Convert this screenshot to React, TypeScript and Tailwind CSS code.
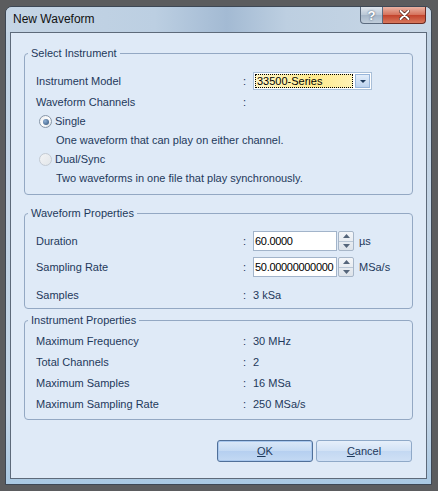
import type { ReactNode } from 'react';
import { clsx } from 'clsx';

function Group({ title, className, children }: { title: string; className?: string; children: ReactNode }) {
  return (
    <fieldset className={clsx('min-w-0 rounded-[4px] border border-[#93a8c3]', className)}>
      <legend className="ml-[3px] px-[3px] h-[14px] leading-[14px] text-[11px] text-[#1e395b]">{title}</legend>
      {children}
    </fieldset>
  );
}

function Row({ label, h, children }: { label: string; h: string; children?: ReactNode }) {
  return (
    <div className={clsx('flex items-center', h)}>
      <span className="w-[207px] shrink-0">{label}</span>
      <span className="w-[10px] shrink-0">:</span>
      <div className="flex items-center">{children}</div>
    </div>
  );
}

function Radio({ checked, disabled }: { checked?: boolean; disabled?: boolean }) {
  return (
    <span
      className={clsx(
        'flex h-[13px] w-[13px] items-center justify-center rounded-full border',
        disabled
          ? 'border-[#c3cad3] bg-[linear-gradient(135deg,#f2f3f5,#e2e6ea)]'
          : 'border-[#8796a8] bg-[linear-gradient(135deg,#e9ebee,#ffffff_55%,#d6dbe1)]'
      )}
    >
      {checked && <span className="h-[6px] w-[6px] rounded-full bg-[radial-gradient(circle_at_35%_35%,#8eb0d6,#2f5076)]" />}
    </span>
  );
}

function Spin() {
  return (
    <div className="ml-[1px] flex h-[20px] w-[16px] flex-col rounded-[2px] border border-[#a7b6c8] bg-[linear-gradient(#f4f6f9,#dde3ea)]">
      <div className="flex flex-1 items-center justify-center border-b border-[#b9c6d5]">
        <svg width="7" height="4" viewBox="0 0 7 4"><path d="M0 4 L3.5 0 L7 4 Z" fill="#55657a" /></svg>
      </div>
      <div className="flex flex-1 items-center justify-center">
        <svg width="7" height="4" viewBox="0 0 7 4"><path d="M0 0 L3.5 4 L7 0 Z" fill="#55657a" /></svg>
      </div>
    </div>
  );
}

function NumberBox({ value, unit }: { value: string; unit: string }) {
  return (
    <>
      <div className="h-[20px] w-[84px] overflow-hidden whitespace-nowrap border border-[#a2b4ca] bg-white pl-[1px] leading-[18px] tracking-[-0.3px] text-black">
        {value}
      </div>
      <Spin />
      <span className="ml-[5px]">{unit}</span>
    </>
  );
}

export default function App() {
  return (
    <div className="h-[491px] w-[438px] bg-[#5b5c5e] pb-[6px] pl-[5px] pr-[6px] pt-[6px] font-['Liberation_Sans',Arial,sans-serif]">
      <div className="flex h-full flex-col rounded-t-[7px] border border-[#3d4754] bg-[linear-gradient(180deg,#c2d3e4_0%,#c4d5e6_85%,#a9c8e2_100%)]">
        <div className="flex h-[25px] shrink-0 items-start rounded-t-[6px] bg-[linear-gradient(90deg,#c5d5e5_0%,#bccfe2_35%,#a3bad3_52%,#bdcfe1_66%,#c8d7e6_100%)]">
          <span className="pl-[7px] pt-[5px] text-[12px] leading-[15px] text-[#111]">New Waveform</span>
          <div className="ml-auto mr-[5px] flex">
            <div className="flex h-[17px] w-[23px] items-center justify-center rounded-bl-[4px] border border-t-0 border-[#5c6c80] bg-[linear-gradient(#dfe6ee,#b9c7d6_50%,#a4b5c8_50%,#c1cedb)] text-[13px] font-bold leading-none text-white [text-shadow:0_0_2px_#33455c]">
              ?
            </div>
            <div className="flex h-[17px] w-[43px] items-center justify-center rounded-br-[4px] border border-l-0 border-t-0 border-[#6a2a22] bg-[linear-gradient(#eab3a4,#d5715a_50%,#c2412a_50%,#d8785c)]">
              <svg width="11" height="10" viewBox="0 0 11 10">
                <path d="M1.5 1 L9.5 9 M9.5 1 L1.5 9" stroke="#4a1a14" strokeWidth="3.4" strokeLinecap="round" />
                <path d="M1.5 1 L9.5 9 M9.5 1 L1.5 9" stroke="#ffffff" strokeWidth="2" strokeLinecap="round" />
              </svg>
            </div>
          </div>
        </div>

        <div className="mb-[5px] ml-[4px] mr-[4px] flex flex-1 flex-col border border-[#5d6a7a] bg-[#dfeaf7] px-[13px] pt-[13px] text-[11px] text-[#1e395b]">
          <Group title="Select Instrument">
            <div className="pb-[6px] pl-[11px] pt-[11px]">
              <Row label="Instrument Model" h="h-[20px]">
                <div className="flex h-[18px] w-[119px] items-center border border-[#a9bfd8] bg-white">
                  <div className="ml-[1px] flex h-[14px] w-[98px] items-center border border-dotted border-black bg-[linear-gradient(90deg,#fff6c6_0%,#ffea8c_60%,#fff2b5_100%)] pl-[1px] leading-none text-black">
                    33500-Series
                  </div>
                  <div className="ml-auto mr-[1px] flex h-[14px] w-[15px] items-center justify-center border border-[#97b5da] bg-[linear-gradient(#e2edfa,#bcd3ef)]">
                    <svg width="6" height="3" viewBox="0 0 6 3"><path d="M0 0 L3 3 L6 0 Z" fill="#1e395b" /></svg>
                  </div>
                </div>
              </Row>
              <div className="mt-[2px]">
                <Row label="Waveform Channels" h="h-[19px]" />
              </div>
              <div className="flex h-[19px] items-center pl-[3px]">
                <Radio checked />
                <span className="ml-[3px]">Single</span>
              </div>
              <div className="flex h-[19px] items-center pl-[20px]">One waveform that can play on either channel.</div>
              <div className="flex h-[19px] items-center pl-[3px]">
                <Radio disabled />
                <span className="ml-[3px]">Dual/Sync</span>
              </div>
              <div className="flex h-[19px] items-center pl-[20px]">Two waveforms in one file that play synchronously.</div>
            </div>
          </Group>

          <Group title="Waveform Properties" className="mt-[11px]">
            <div className="pb-[3px] pl-[11px] pt-[11px]">
              <Row label="Duration" h="h-[20px]">
                <NumberBox value="60.0000" unit="µs" />
              </Row>
              <div className="mt-[6px]">
                <Row label="Sampling Rate" h="h-[20px]">
                  <NumberBox value="50.00000000000" unit="MSa/s" />
                </Row>
              </div>
              <div className="mt-[8px]">
                <Row label="Samples" h="h-[20px]">
                  <span>3 kSa</span>
                </Row>
              </div>
            </div>
          </Group>

          <Group title="Instrument Properties" className="mt-[4px]">
            <div className="pb-[4px] pl-[11px] pt-[4px]">
              <Row label="Maximum Frequency" h="h-[21px]">30 MHz</Row>
              <Row label="Total Channels" h="h-[21px]">2</Row>
              <Row label="Maximum Samples" h="h-[21px]">16 MSa</Row>
              <Row label="Maximum Sampling Rate" h="h-[21px]">250 MSa/s</Row>
            </div>
          </Group>

          <div className="mr-[1px] mt-[20px] flex justify-end gap-[3px]">
            <button className="h-[22px] w-[96px] rounded-[3px] border border-[#50709a] bg-[linear-gradient(#dbe8f8,#c4daf3_50%,#b5cff0_50%,#c3d9f3)] text-[11px] text-[#1e395b] shadow-[inset_0_0_0_1px_#a9c8ee]">
              <span className="underline underline-offset-1">O</span>K
            </button>
            <button className="h-[22px] w-[96px] rounded-[3px] border border-[#8fa9c8] bg-[linear-gradient(#e6effa,#d2e2f5_50%,#c3d8f2_50%,#cfe0f5)] text-[11px] text-[#1e395b]">
              <span className="underline underline-offset-1">C</span>ancel
            </button>
          </div>
        </div>
      </div>
    </div>
  );
}
